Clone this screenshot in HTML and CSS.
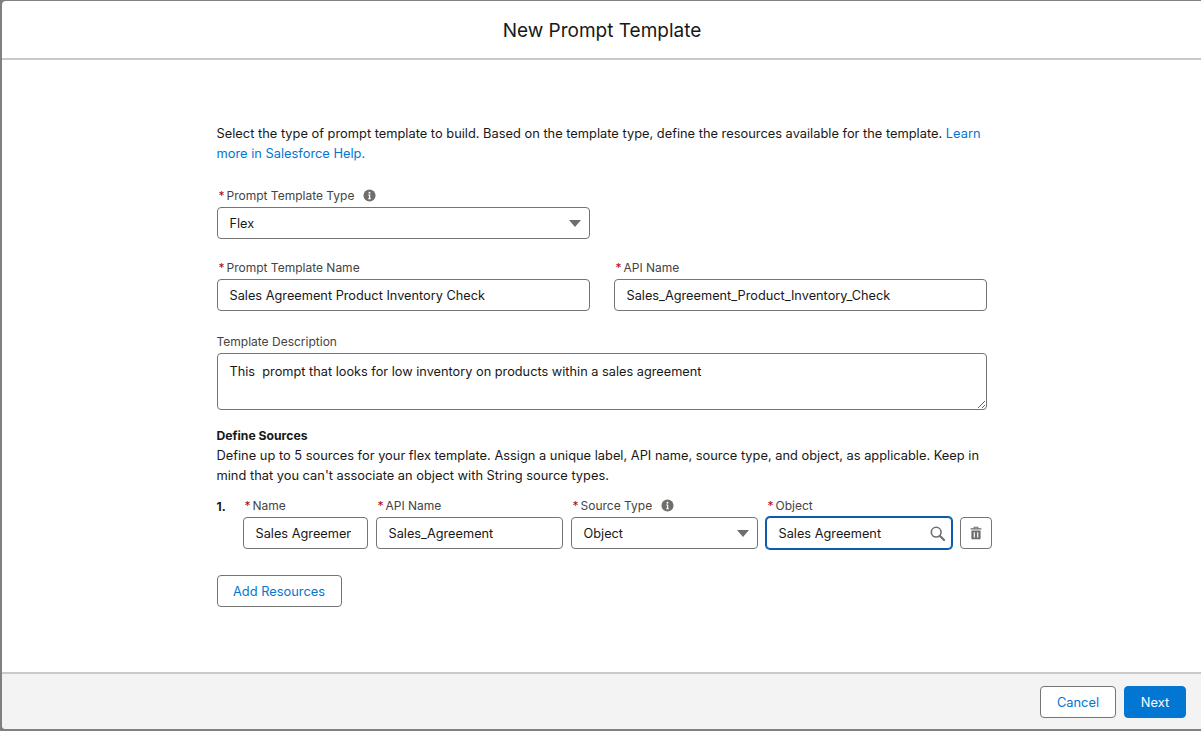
FILE: index.html
```html
<!DOCTYPE html>
<html lang="en">
<head>
  <meta charset="UTF-8" />
  <title>New Prompt Template</title>
  <link rel="stylesheet" href="styles.css">
</head>
<body>
  <div class="modal">
    <div class="modal-header">
      <h2>New Prompt Template</h2>
    </div>

    <div class="modal-body">
      <div class="form">
        <p class="intro">Select the type of prompt template to build. Based on the template type, define the resources available for the template. <a href="#">Learn more in Salesforce Help.</a></p>

        <div class="grid-row type-row">
          <div class="field">
            <label><span class="req">*</span>Prompt Template Type
              <svg class="info" viewBox="0 0 14 14"><circle cx="7" cy="7" r="6.5" fill="#706e6b"/><circle cx="7" cy="4" r="1.1" fill="#fff"/><path d="M5.6 6h2.2v4h.8v1H5.5v-1h.9V7h-.8z" fill="#fff"/></svg>
            </label>
            <div class="select">Flex<span class="caret"></span></div>
          </div>
        </div>

        <div class="grid-row name-row">
          <div class="field">
            <label><span class="req">*</span>Prompt Template Name</label>
            <input type="text" value="Sales Agreement Product Inventory Check" />
          </div>
          <div class="field">
            <label><span class="req">*</span>API Name</label>
            <input type="text" value="Sales_Agreement_Product_Inventory_Check" />
          </div>
        </div>

        <div class="field desc-row">
          <label>Template Description</label>
          <textarea>This  prompt that looks for low inventory on products within a sales agreement</textarea>
        </div>

        <h3>Define Sources</h3>
        <p class="sources-help">Define up to 5 sources for your flex template. Assign a unique label, API name, source type, and object, as applicable. Keep in mind that you can't associate an object with String source types.</p>

        <div class="source-row">
          <span class="num">1.</span>
          <div class="field f-name">
            <label><span class="req">*</span>Name</label>
            <input type="text" value="Sales Agreement" />
          </div>
          <div class="field f-wide">
            <label><span class="req">*</span>API Name</label>
            <input type="text" value="Sales_Agreement" />
          </div>
          <div class="field f-wide">
            <label><span class="req">*</span>Source Type
              <svg class="info" viewBox="0 0 14 14"><circle cx="7" cy="7" r="6.5" fill="#706e6b"/><circle cx="7" cy="4" r="1.1" fill="#fff"/><path d="M5.6 6h2.2v4h.8v1H5.5v-1h.9V7h-.8z" fill="#fff"/></svg>
            </label>
            <div class="select">Object<span class="caret"></span></div>
          </div>
          <div class="field f-object">
            <label><span class="req">*</span>Object</label>
            <div class="lookup">
              <span>Sales Agreement</span>
              <svg class="search" viewBox="0 0 16 16" fill="none" stroke="#706e6b" stroke-width="1.7"><circle cx="6.6" cy="6.6" r="5.2"/><path d="M10.4 10.4l4.6 4.6" stroke-width="2.2" stroke-linecap="round"/></svg>
            </div>
          </div>
          <button class="icon-btn">
            <svg viewBox="0 0 14 14" fill="#706e6b"><path d="M5.3.8h3.4c.4 0 .7.3.7.7v.7h3v1.2H1.6V2.2h3v-.7c0-.4.3-.7.7-.7zm.5 1v.4h2.4v-.4z"/><path d="M2.4 4.6h9.2v7.8c0 .5-.4.9-.9.9H3.3c-.5 0-.9-.4-.9-.9zm2.3 1.6v5.4h1.2V6.2zm3.4 0v5.4h1.2V6.2z" fill-rule="evenodd"/></svg>
          </button>
        </div>

        <button class="btn add-btn">Add Resources</button>
      </div>
    </div>

    <div class="modal-footer">
      <button class="btn cancel">Cancel</button>
      <button class="btn next">Next</button>
    </div>
  </div>
</body>
</html>
```

FILE: styles.css
```css
html, body {
  height: 100%;
}

body {
  margin: 0;
  padding: 1px 0 2px 2px;
  box-sizing: border-box;
  background-color: #7f8080;
  font-family: "Inter", "Liberation Sans", Arial, sans-serif;
  font-size: 12.85px;
  color: #181818;
  overflow: hidden;
}

.modal {
  height: 100%;
  background: #fff;
  border-radius: 4px 0 0 4px;
  display: flex;
  flex-direction: column;
  overflow: hidden;
}

.modal-header {
  height: 57px;
  flex-shrink: 0;
  box-sizing: content-box;
  display: flex;
  align-items: center;
  justify-content: center;
  border-bottom: 2px solid #c9c9c9;
}

.modal-header h2 {
  margin: 2px 0 0 1px;
  font-size: 19px;
  font-weight: 400;
}

.modal-body {
  flex: 1;
}

.form {
  width: 770px;
  margin: 0 auto;
  padding-top: 64px;
}

.intro {
  margin: 0;
  line-height: 20px;
}

a {
  color: #0176d3;
  text-decoration: none;
}

.grid-row {
  display: grid;
  grid-template-columns: 373px 373px;
  column-gap: 24px;
}

.type-row {
  margin-top: 23px;
}

.name-row {
  margin-top: 20px;
}

.desc-row {
  margin-top: 22px;
}

label {
  display: block;
  height: 20px;
  line-height: 18px;
  font-size: 12px;
  color: #444;
  white-space: nowrap;
}

.req {
  color: #ba0517;
  margin: 0 2px 0 2px;
}

.info {
  width: 13px;
  height: 13px;
  margin-left: 5px;
  vertical-align: -2px;
}

input, textarea, .select, .lookup {
  display: block;
  width: 100%;
  box-sizing: border-box;
  font: inherit;
  font-size: 12.75px;
  color: #181818;
  background: #fff;
  border: 1px solid #747474;
  border-radius: 4px;
  outline: none;
}

input, .select, .lookup {
  height: 32px;
  line-height: 31px;
  padding: 0 16px 0 12px;
}

textarea {
  height: 57px;
  padding: 8px 12px;
  line-height: 20px;
  resize: vertical;
}

.select, .lookup {
  position: relative;
}

.caret {
  position: absolute;
  right: 8px;
  top: 12px;
  width: 0;
  height: 0;
  border-left: 6px solid transparent;
  border-right: 6px solid transparent;
  border-top: 7px solid #706e6b;
}

h3 {
  margin: 16px 0 0;
  font-size: 12.2px;
  font-weight: 700;
  line-height: 20px;
}

.sources-help {
  margin: 0;
  line-height: 20px;
}

.source-row {
  display: flex;
  align-items: flex-end;
  gap: 8px;
  width: 775px;
  margin-top: 11px;
  position: relative;
}

.num {
  position: absolute;
  left: 0;
  top: 0;
  font-size: 12px;
  font-weight: 700;
  line-height: 20px;
}

.f-name {
  width: 125px;
  margin-left: 26px;
}

.f-wide {
  width: 187px;
}

.f-object {
  width: 186px;
}

.lookup {
  border-color: #0b5cab;
  box-shadow: 0 0 0 1px #0b5cab;
}

.search {
  position: absolute;
  right: 6px;
  top: 8px;
  width: 15px;
  height: 15px;
}

.icon-btn {
  width: 32px;
  height: 32px;
  padding: 0;
  background: #fff;
  border: 1px solid #747474;
  border-radius: 4px;
  display: flex;
  align-items: center;
  justify-content: center;
}

.icon-btn svg {
  width: 14px;
  height: 14px;
}

.btn {
  height: 32px;
  font: inherit;
  border: 1px solid #747474;
  border-radius: 4px;
  background: #fff;
  color: #0176d3;
  padding: 0;
}

.add-btn {
  display: block;
  width: 125px;
  margin-top: 26px;
}

.modal-footer {
  height: 57px;
  flex-shrink: 0;
  box-sizing: border-box;
  background: #f3f3f3;
  border-top: 2px solid #c9c9c9;
  display: flex;
  justify-content: flex-end;
  align-items: center;
  gap: 8px;
  padding: 1px 15px 0 0;
}

.cancel {
  width: 76px;
}

.next {
  width: 62px;
  background: #0176d3;
  border-color: #0176d3;
  color: #fff;
}
```
